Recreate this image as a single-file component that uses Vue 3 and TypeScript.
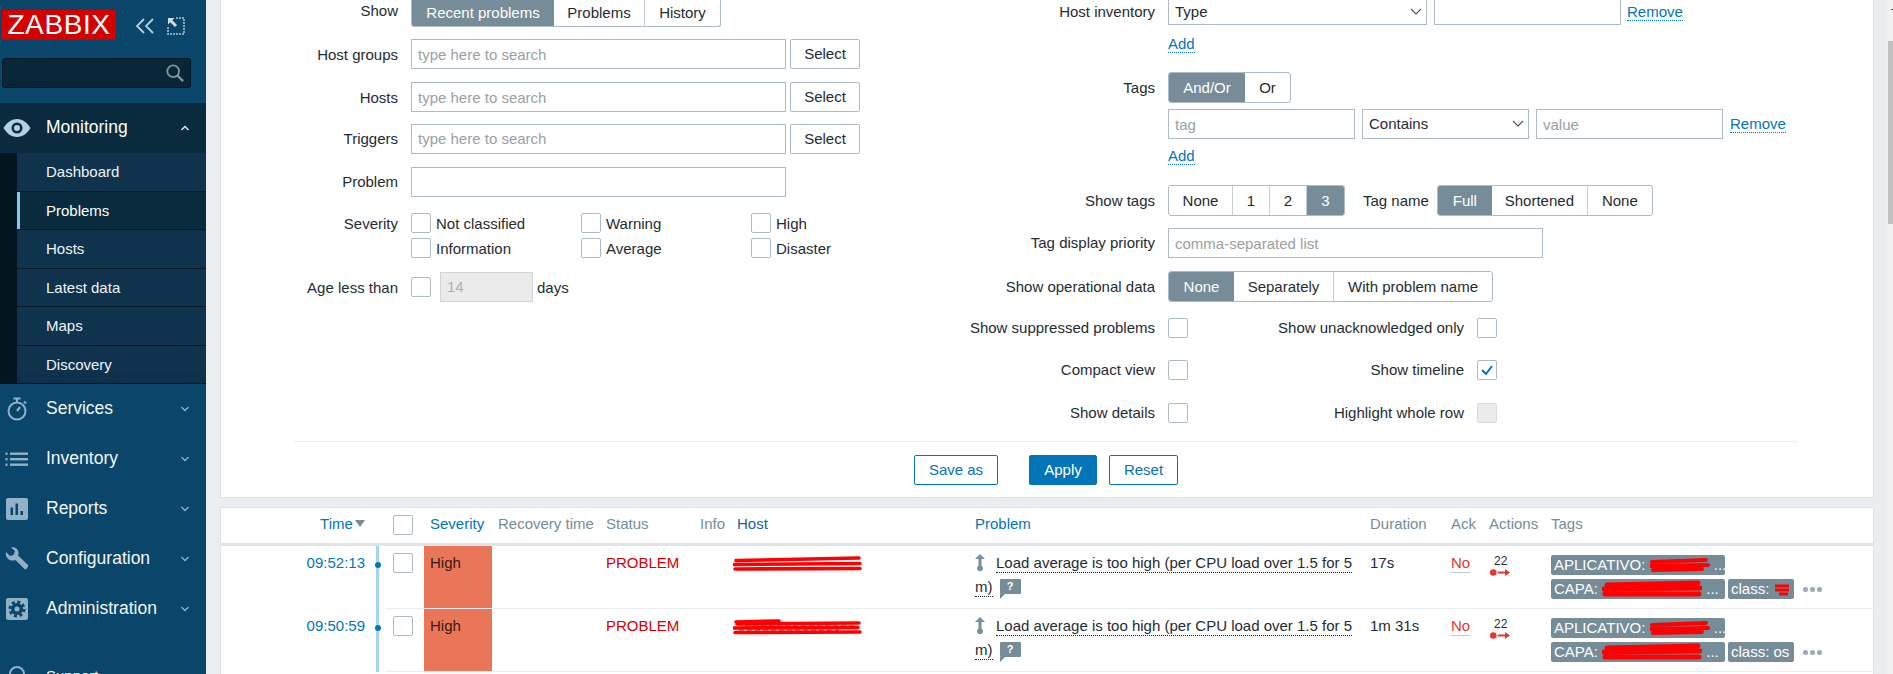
<script setup lang="ts">
type Seg = { t: string; on?: boolean; w: number }
const showSeg: Seg[] = [{ t: 'Recent problems', on: true, w: 142 }, { t: 'Problems', w: 91 }, { t: 'History', w: 75 }]
const andOr: Seg[] = [{ t: 'And/Or', on: true, w: 76 }, { t: 'Or', w: 45 }]
const showTags: Seg[] = [{ t: 'None', w: 64 }, { t: '1', w: 37 }, { t: '2', w: 37 }, { t: '3', on: true, w: 37 }]
const tagName: Seg[] = [{ t: 'Full', on: true, w: 54 }, { t: 'Shortened', w: 96 }, { t: 'None', w: 64 }]
const opData: Seg[] = [{ t: 'None', on: true, w: 65 }, { t: 'Separately', w: 100 }, { t: 'With problem name', w: 158 }]
const subMenu = ['Dashboard', 'Problems', 'Hosts', 'Latest data', 'Maps', 'Discovery']
const multi = ['Host groups', 'Hosts', 'Triggers']
const sev = ['Not classified', 'Warning', 'High', 'Information', 'Average', 'Disaster']
const rows = [
  { time: '09:52:13', dur: '17s' },
  { time: '09:50:59', dur: '1m 31s' }
]
</script>

<template>
  <div class="page">
    <aside class="side">
      <div class="brand">
        <span class="logo">ZABBIX</span>
        <svg class="ctl" width="22" height="18" viewBox="0 0 22 18"><path d="M10 2 3 9l7 7M19 2l-7 7 7 7" fill="none" stroke="#b9cfdc" stroke-width="1.8"/></svg>
        <svg class="ctl ctl2" width="18" height="18" viewBox="0 0 18 18"><path d="M9 1h8v16H1V9" fill="none" stroke="#a9c3d3" stroke-width="1.6" stroke-dasharray="2 1"/><path d="M1 1h6.500L5.300 3.200 10 8l-2 2-4.800-4.700L1 7.500z" fill="#cfdfe8"/></svg>
      </div>
      <div class="search">
        <svg width="18" height="18" viewBox="0 0 20 20"><circle cx="8" cy="8" r="6.500" fill="none" stroke="#7d97a6" stroke-width="2"/><path d="m12.500 12.500 6.500 6.500" stroke="#7d97a6" stroke-width="2.600"/></svg>
      </div>
      <div class="nav active">
        <svg class="nicon" width="28" height="20" viewBox="0 0 28 20"><path fill-rule="evenodd" d="M14 1C8 1 3.500 5 .5 10 3.500 15 8 19 14 19s10.500-4 13.500-9C24.500 5 20 1 14 1Zm0 3.500a5.500 5.500 0 1 1 0 11 5.500 5.500 0 0 1 0-11Zm0 2.500a3 3 0 1 0 0 6 3 3 0 0 0 0-6Z" fill="#b4d0e1"/></svg>
        <span class="ntext">Monitoring</span>
        <svg class="chev" width="8" height="6" viewBox="0 0 8 6"><path d="m.5 5 3.500-3.500L7.500 5" fill="none" stroke="#e3edf3" stroke-width="1.300"/></svg>
      </div>
      <div class="subwrap">
        <ul class="sub">
          <li v-for="s in subMenu" :key="s" :class="{ cur: s === 'Problems' }">{{ s }}</li>
        </ul>
      </div>
      <div class="nav">
        <svg class="nicon" width="28" height="24" viewBox="0 0 28 24"><g fill="none" stroke="#8fb2c8" stroke-width="2"><circle cx="14" cy="14" r="8.500"/><path d="M10.500 1.500h7M14 2v3M21 4.500l2 2"/><path d="m14 14 3-4" stroke-width="2.200"/></g></svg>
        <span class="ntext">Services</span>
        <svg class="chev" width="8" height="6" viewBox="0 0 8 6"><path d="m.5 1 3.500 3.500L7.500 1" fill="none" stroke="#8fb2c8" stroke-width="1.300"/></svg>
      </div>
      <div class="nav">
        <svg class="nicon" width="28" height="16" viewBox="0 0 28 16"><g fill="#8fb2c8"><rect x="2.500" y="1.500" width="2" height="2.400"/><rect x="7" y="1.500" width="18" height="2.400"/><rect x="2.500" y="7" width="2" height="2.400"/><rect x="7" y="7" width="18" height="2.400"/><rect x="2.500" y="12.500" width="2" height="2.400"/><rect x="7" y="12.500" width="18" height="2.400"/></g></svg>
        <span class="ntext">Inventory</span>
        <svg class="chev" width="8" height="6" viewBox="0 0 8 6"><path d="m.5 1 3.500 3.500L7.500 1" fill="none" stroke="#8fb2c8" stroke-width="1.300"/></svg>
      </div>
      <div class="nav">
        <svg class="nicon" width="28" height="22" viewBox="0 0 28 22"><path fill-rule="evenodd" d="M5 0h18a2 2 0 0 1 2 2v18a2 2 0 0 1-2 2H5a2 2 0 0 1-2-2V2a2 2 0 0 1 2-2Zm2.500 9.500V17h2.500V9.500Zm5-4V17H15V5.500Zm5 7.500v4H20v-4Z" fill="#8fb2c8"/></svg>
        <span class="ntext">Reports</span>
        <svg class="chev" width="8" height="6" viewBox="0 0 8 6"><path d="m.5 1 3.500 3.500L7.500 1" fill="none" stroke="#8fb2c8" stroke-width="1.300"/></svg>
      </div>
      <div class="nav">
        <svg class="nicon" width="28" height="24" viewBox="0 0 28 24"><path d="M3 5l4 4 3.500-1L12 4 8 .5C12-.5 15.500 2 15.500 6c0 .9-.2 1.700-.5 2.500L25 18c.5 2-1 4-3 4.500L12.500 13c-1 .4-2 .5-3 .5C5 13.500 2 9.500 3 5Z" fill="#8fb2c8"/></svg>
        <span class="ntext">Configuration</span>
        <svg class="chev" width="8" height="6" viewBox="0 0 8 6"><path d="m.5 1 3.500 3.500L7.500 1" fill="none" stroke="#8fb2c8" stroke-width="1.300"/></svg>
      </div>
      <div class="nav">
        <svg class="nicon" width="28" height="22" viewBox="0 0 28 22"><rect x="3" width="22" height="22" rx="2" fill="#8fb2c8"/><circle cx="14" cy="11" r="6" fill="#0a466a"/><circle cx="14" cy="11" r="7" fill="none" stroke="#0a466a" stroke-width="3" stroke-dasharray="3 2.500"/><circle cx="14" cy="11" r="2.500" fill="#8fb2c8"/></svg>
        <span class="ntext">Administration</span>
        <svg class="chev" width="8" height="6" viewBox="0 0 8 6"><path d="m.5 1 3.500 3.500L7.500 1" fill="none" stroke="#8fb2c8" stroke-width="1.300"/></svg>
      </div>
      <div class="support">
        <svg class="nicon" width="28" height="22" viewBox="0 0 28 22"><path d="M7 16v-6a7 7 0 0 1 14 0v6" fill="none" stroke="#8fb2c8" stroke-width="2"/></svg>
        <span>Support</span>
      </div>
    </aside>

    <main class="main">
      <section class="filter">
        <div class="cols">
          <div class="left">
            <div class="frow first">
              <label class="lab">Show</label>
              <div class="seg"><span v-for="s in showSeg" :key="s.t" :class="{ on: s.on }" :style="{ width: s.w + 'px' }">{{ s.t }}</span></div>
            </div>
            <div v-for="m in multi" :key="m" class="frow r30">
              <label class="lab">{{ m }}</label>
              <div class="inp wide ph">type here to search</div>
              <button class="sel">Select</button>
            </div>
            <div class="frow r30">
              <label class="lab">Problem</label>
              <div class="inp wide"></div>
            </div>
            <div class="frow sevrow">
              <label class="lab">Severity</label>
              <div class="sevgrid">
                <div v-for="s in sev" :key="s" class="chk"><i class="box"></i><span>{{ s }}</span></div>
              </div>
            </div>
            <div class="frow age">
              <label class="lab">Age less than</label>
              <i class="box"></i>
              <div class="inp dis">14</div>
              <span class="days">days</span>
            </div>
          </div>
          <div class="right">
            <div class="frow rfirst">
              <label class="lab rlab">Host inventory</label>
              <div class="inp dd w259">Type<svg width="12" height="8" viewBox="0 0 12 8"><path d="m1 1 5 5 5-5" fill="none" stroke="#4a5a63" stroke-width="1.200"/></svg></div>
              <div class="inp w187"></div>
              <a class="lnk">Remove</a>
            </div>
            <div class="frow addrow"><a class="lnk">Add</a></div>
            <div class="frow tags">
              <label class="lab rlab">Tags</label>
              <div class="seg seg2"><span v-for="s in andOr" :key="s.t" :class="{ on: s.on }" :style="{ width: s.w + 'px' }">{{ s.t }}</span></div>
            </div>
            <div class="frow tagrow">
              <div class="inp ph w187b">tag</div>
              <div class="inp dd w167">Contains<svg width="12" height="8" viewBox="0 0 12 8"><path d="m1 1 5 5 5-5" fill="none" stroke="#4a5a63" stroke-width="1.200"/></svg></div>
              <div class="inp ph w187b">value</div>
              <a class="lnk">Remove</a>
            </div>
            <div class="frow addrow2"><a class="lnk">Add</a></div>
            <div class="frow showtags">
              <label class="lab rlab">Show tags</label>
              <div class="seg seg2"><span v-for="s in showTags" :key="s.t" :class="{ on: s.on }" :style="{ width: s.w + 'px' }">{{ s.t }}</span></div>
              <label class="tname">Tag name</label>
              <div class="seg seg2"><span v-for="s in tagName" :key="s.t" :class="{ on: s.on }" :style="{ width: s.w + 'px' }">{{ s.t }}</span></div>
            </div>
            <div class="frow prio">
              <label class="lab rlab">Tag display priority</label>
              <div class="inp ph w375">comma-separated list</div>
            </div>
            <div class="frow opdata">
              <label class="lab rlab">Show operational data</label>
              <div class="seg seg2"><span v-for="s in opData" :key="s.t" :class="{ on: s.on }" :style="{ width: s.w + 'px' }">{{ s.t }}</span></div>
            </div>
            <div class="frow pair p1">
              <label class="lab rlab">Show suppressed problems</label><i class="box"></i>
              <label class="lab2">Show unacknowledged only</label><i class="box"></i>
            </div>
            <div class="frow pair p2">
              <label class="lab rlab">Compact view</label><i class="box"></i>
              <label class="lab2">Show timeline</label>
              <i class="box"><svg width="14" height="12" viewBox="0 0 14 12"><path d="m2 6 4 4 6-8" fill="none" stroke="#0275b8" stroke-width="2"/></svg></i>
            </div>
            <div class="frow pair p3">
              <label class="lab rlab">Show details</label><i class="box"></i>
              <label class="lab2">Highlight whole row</label><i class="box off"></i>
            </div>
          </div>
        </div>
        <div class="actions">
          <button class="btn save">Save as</button>
          <button class="btn apply">Apply</button>
          <button class="btn reset">Reset</button>
        </div>
      </section>

      <section class="table">
        <div class="thead">
          <span class="c time blue">Time <i class="sort"></i></span>
          <span class="c ck hck"><i class="box"></i></span>
          <span class="c sevc blue">Severity</span>
          <span class="c rec">Recovery time</span>
          <span class="c stat">Status</span>
          <span class="c info">Info</span>
          <span class="c host blue2">Host</span>
          <span class="c prob blue">Problem</span>
          <span class="c dur">Duration</span>
          <span class="c ack">Ack</span>
          <span class="c act">Actions</span>
          <span class="c tg">Tags</span>
        </div>
        <div v-for="(r, i) in rows" :key="r.time" class="trow">
          <span class="c time tval">{{ r.time }}</span>
          <span class="tl"><i class="dot"></i></span>
          <span class="c ck"><i class="box"></i></span>
          <span class="c sevc high">High</span>
          <span class="c rec"></span>
          <span class="c stat red">PROBLEM</span>
          <span class="c info"></span>
          <span class="c host">
            <svg width="130" height="18" viewBox="0 0 130 18"><path :d="i === 0 ? 'M8 9h110' : 'M12 8h112M6 12h100'" stroke="#222" stroke-width="1" fill="none" stroke-dasharray="5 3"/><path :d="i === 0 ? 'M3 5.500 126 3M1 9.500 127 8.500M2 14 127 13.500' : 'M3 4 46 3M4 6 126 5M1 10 125 9.500M2 14.500 127 14'" stroke="#ff0000" stroke-width="3.600" fill="none" stroke-linecap="round"/></svg>
          </span>
          <div class="c prob ptext">
            <div class="pline">
              <svg class="arrow" width="10" height="18" viewBox="0 0 10 18"><path d="M5 0 10 5H6.500v6.700a3 3 0 1 1-3 0V5H0z" fill="#76909f"/></svg>
              <span class="dotted">Load average is too high (per CPU load over 1.5 for 5</span>
            </div>
            <div class="pline">
              <span class="dotted">m)</span>
              <span class="hint"><b>?</b><i></i></span>
            </div>
          </div>
          <span class="c dur plain">{{ r.dur }}</span>
          <span class="c ack"><span class="no">No</span></span>
          <span class="c act acticon">
            <em>22</em>
            <svg width="22" height="9" viewBox="0 0 22 9"><circle cx="3.300" cy="4.500" r="3.300" fill="#e33734"/><path d="M8 3.500h7V1l5 3.500L15 8V5.500H8z" fill="#e33734"/></svg>
          </span>
          <div class="c tg chips">
            <div class="chiprow">
              <span class="chip w174">APLICATIVO: <svg class="scr" width="60" height="14" viewBox="0 0 60 14"><path d="M2 4 56 2M1 8 58 7M3 12 52 11" stroke="#f00" stroke-width="4" fill="none" stroke-linecap="round"/></svg> ...</span>
            </div>
            <div class="chiprow">
              <span class="chip w174">CAPA: <svg class="scr" width="100" height="18" viewBox="0 0 100 18"><path d="M5 5 96 3M2 9 98 8M3 14 97 14" stroke="#f00" stroke-width="5" fill="none" stroke-linecap="round"/></svg> ...</span>
              <span class="chip w66">class: <template v-if="i === 1">os</template><svg v-else width="16" height="14" viewBox="0 0 16 14"><path d="M1 4h14M1 8h14M5 12h9" stroke="#f00" stroke-width="3" fill="none"/></svg></span>
              <span class="more"><i></i><i></i><i></i></span>
            </div>
          </div>
        </div>
      </section>
    </main>
    <div class="scroll"><i></i></div>
  </div>
</template>

<style>
html, body { margin: 0; height: 674px; overflow: hidden; background: #ebeef0; }
</style>

<style scoped>
.page { display: flex; width: 1893px; height: 674px; overflow: hidden; font: 15px/1.2 "Liberation Sans", Arial, sans-serif; color: #1f2c33; background: #ebeef0; }

/* sidebar */
.side { width: 206px; flex: none; background: #0a466a; color: #f2f6f8; height: 674px; overflow: hidden; }
.brand { height: 58px; display: flex; align-items: flex-start; padding: 10px 0 0 2px; box-sizing: border-box; }
.logo { width: 114px; height: 30px; background: #d40000; color: #fff; font-size: 28px; line-height: 30px; text-align: center; letter-spacing: .6px; }
.ctl { margin: 7px 0 0 18px; }
.ctl2 { margin-left: 11px; }
.search { margin-left: 2px; width: 189px; height: 30px; box-sizing: border-box; background: #082637; border: 1px solid #041722; border-radius: 3px; display: flex; justify-content: flex-end; align-items: center; padding-right: 6px; }
.nav { height: 50px; display: flex; align-items: center; font-size: 17.500px; }
.nav.active { margin-top: 15px; background: #0a2b3e; color: #fff; }
.nicon { width: 28px; margin-left: 3px; flex: none; }
.ntext { margin-left: 15px; flex: 1; padding-bottom: 2px; }
.chev { margin-right: 17px; }
.subwrap { background: #04151f; padding-left: 17px; height: 231px; }
.sub { list-style: none; margin: 0; padding: 0; font-size: 15px; }
.sub li { height: 37.500px; line-height: 37px; padding-left: 29px; background: #0f324d; border-bottom: 1.200px solid #061b29; color: #eef4f7; }
.sub li.cur { background: #0a2b3e; color: #fff; box-shadow: inset 3px 0 0 #7ec8f2; }
.sub li:last-child { border-bottom: 0; background: linear-gradient(#0f324d 70%, #0c3048); }
.support { display: flex; align-items: flex-start; margin-top: 30px; }
.support span { margin: 3px 0 0 15px; }

/* layout */
.main { flex: 1; min-width: 0; padding-left: 14px; box-sizing: border-box; }
.filter { width: 1654px; height: 498px; background: #fff; border: 1px solid #dfe4e7; border-top: 0; box-sizing: border-box; }
.cols { display: flex; height: 441px; }
.left { width: 717px; flex: none; }
.right { flex: 1; margin-left: 2px; }

/* form */
.frow { display: flex; align-items: center; }
.lab { width: 177px; text-align: right; margin-right: 13px; flex: none; }
.rlab { width: 215px; }
.first { height: 27px; }
.first .lab { padding-bottom: 5px; }
.r30 { height: 30px; margin-top: 13px; }
.r30:nth-child(2) { margin-top: 12px; padding-top: 0; }
.r30:nth-child(4) { margin-top: 12px; }
.r30:nth-child(2) .lab, .r30:nth-child(3) .lab { padding-top: 1px; }
.inp { height: 30px; box-sizing: border-box; border: 1px solid #acbbc4; background: #fff; display: flex; align-items: center; padding: 0 6px; flex: none; }
.wide { width: 375px; }
.ph { color: #9aa0a4; padding-top: 1px; }
.r30:nth-child(4) .ph { padding-top: 0; }
.sel { margin-left: 4px; width: 70px; height: 30px; box-sizing: border-box; background: #fff; border: 1px solid #acbbc4; border-radius: 2px; font: inherit; color: #1f2c33; padding: 0; }
.sevrow { margin-top: 16px; align-items: flex-start; }
.sevrow .lab { padding-top: 2px; }
.sevgrid { display: grid; grid-template-columns: 170px 170px 170px; row-gap: 5px; }
.chk { display: flex; align-items: center; height: 20px; }
.chk .box { margin-right: 5px; }
.chk span { padding-top: 2px; }
.box { width: 20px; height: 20px; box-sizing: border-box; border: 1px solid #acbbc4; border-radius: 2px; background: #fff; flex: none; display: inline-flex; align-items: center; justify-content: center; }
.box.off { background: #ebebeb; border-color: #dcdcdc; }
.age { margin-top: 14px; }
.age .lab { padding-top: 1px; }
.dis { width: 93px; margin-left: 9px; background: #ebebeb; border-color: #cfd6da; color: #a8b0b5; }
.days { margin-left: 4px; padding-top: 2px; }
.seg { display: flex; height: 27px; box-sizing: border-box; border: 1px solid #acbbc4; border-top: 0; border-radius: 0 0 3px 3px; overflow: hidden; flex: none; }
.seg span { display: flex; align-items: center; justify-content: center; box-sizing: border-box; border-right: 1px solid #c4d0d6; color: #1f2c33; }
.seg span:last-child { border-right: 0; }
.seg span.on { background: #768d99; color: #fff; border-right: 0; }
.seg2 { height: 31px; border-top: 1px solid #acbbc4; border-radius: 3px; }
.rfirst { height: 25px; }
.rfirst .lab { padding-bottom: 2px; }
.rfirst .inp { height: 26px; border-top: 0; margin-top: -1px; }
.w259 { width: 259px; }
.w187 { width: 187px; margin-left: 7px; }
.dd { justify-content: space-between; padding-right: 4px; }
.dd svg { flex: none; }
.lnk { color: #0275b8; border-bottom: 1px dotted #0275b8; line-height: 16px; margin-left: 6px; }
.addrow { height: 47px; padding-left: 222px; padding-bottom: 8px; box-sizing: border-box; }
.tags { height: 31px; }
.tagrow { margin-top: 6px; padding-left: 228px; }
.tagrow .lnk { margin-left: 0; }
.w187b { width: 187px; margin-right: 7px; }
.w167 { width: 167px; margin-right: 7px; }
.addrow2 { height: 46px; padding-left: 228px; padding-bottom: 12px; box-sizing: border-box; }
.addrow2 .lnk { margin-left: 0; }
.showtags { height: 31px; }
.tname { margin: 0 8px 0 18px; }
.prio { margin-top: 12px; }
.w375 { width: 375px; }
.opdata { margin-top: 13px; }
.pair { height: 20px; }
.p1 { margin-top: 16px; }
.p2 { margin-top: 22px; }
.p3 { margin-top: 23px; }
.lab2 { width: 276px; margin-right: 13px; text-align: right; flex: none; }
.actions { border-top: 1px solid #ebeef0; margin: 0 75px 0 73px; padding-top: 13px; display: flex; }
.btn { height: 30px; box-sizing: border-box; border-radius: 2px; border: 1px solid #0275b8; background: #fff; color: #0275b8; font: inherit; padding: 0; }
.save { width: 84px; margin-left: 620px; }
.apply { width: 68px; margin-left: 31px; background: #0275b8; color: #fff; }
.reset { width: 69px; margin-left: 12px; }

/* table */
.table { width: 1654px; height: 167px; margin-top: 9px; background: #fff; border: 1px solid #dfe4e7; border-bottom: 0; box-sizing: border-box; }
.thead { display: flex; height: 35px; padding-bottom: 0; align-items: flex-start; border-bottom: 3px solid #dfe4e7; box-sizing: content-box; color: #768d99; }
.thead .c { padding-top: 7px; }
.thead .hck { padding-top: 7px; }
.thead .blue { color: #0275b8; }
.blue2 { color: #1c5f9c; }
.c { flex: none; box-sizing: border-box; }
.time { width: 144px; text-align: right; }
.ck { width: 31px; margin-left: 14px; padding-top: 7px; }
.hck { margin-left: 28px; display: flex; }
.sevc { width: 68px; padding-left: 6px; }
.rec { width: 114px; padding-left: 6px; }
.stat { width: 94px; }
.info { width: 37px; }
.host { width: 238px; }
.prob { width: 395px; }
.dur { width: 81px; }
.ack { width: 38px; }
.act { width: 62px; }
.tg { flex: 1; }
.sort { display: inline-block; width: 0; height: 0; border: 5px solid transparent; border-top: 7px solid #768d99; border-bottom: 0; margin-left: -2px; vertical-align: 2px; }
.trow { display: flex; height: 63px; box-sizing: border-box; align-items: flex-start; background: linear-gradient(#ebeef0, #ebeef0) no-repeat 165px 100% / 100% 1px; }
.tval { color: #0275b8; padding-top: 8px; }
.tl { width: 3px; height: 63px; background: #a5d5f0; margin-left: 11px; flex: none; display: flex; align-items: flex-start; justify-content: center; }
.dot { width: 6px; height: 6px; border-radius: 50%; background: #0275b8; flex: none; margin-top: 16px; }
.high { background: #e97659; height: 62px; padding-top: 8px; color: #3a1a10; }
.red { color: #d40000; padding-top: 8px; }
.trow .host { padding-top: 9px; }
.trow .host svg { display: block; margin-left: -4px; }
.ptext { padding-top: 5px; }
.pline { display: flex; align-items: center; height: 24px; }
.arrow { flex: none; margin-right: 11px; }
.dotted { border-bottom: 1px dotted #1f2c33; line-height: 18px; white-space: nowrap; }
.hint { position: relative; width: 21px; height: 15px; margin: -2px 0 0 7px; background: #768d99; border-radius: 1px; color: #fff; font-size: 11px; line-height: 15px; text-align: center; flex: none; }
.hint b { font-weight: 700; }
.hint i { position: absolute; left: 0; top: 15px; width: 0; height: 0; border-left: 5px solid #768d99; border-bottom: 5px solid transparent; }
.plain { padding-top: 8px; }
.trow .ack { padding-top: 8px; }
.no { color: #e33734; border-bottom: 1px solid #bccbd3; padding-bottom: 1px; }
.acticon { padding: 9px 0 0 1px; display: flex; flex-direction: column; align-items: flex-start; }
.acticon em { font-style: normal; font-size: 12px; line-height: 13px; margin-left: 4px; }
.chips { padding-top: 9px; }
.chiprow { display: flex; align-items: center; height: 20px; margin-bottom: 4px; }
.chip { height: 20px; box-sizing: border-box; background: #768d99; color: #fff; border-radius: 2px; display: flex; align-items: center; padding-left: 3px; white-space: pre; overflow: hidden; line-height: 20px; flex: none; }
.chip + .chip { margin-left: 3px; }
.w174 { width: 174px; }
.w66 { width: 66px; }
.scr { flex: none; }
.more { display: flex; gap: 2px; margin-left: 9px; }
.more i { width: 5px; height: 5px; border-radius: 50%; background: #9aa9b3; }

/* browser scrollbar */
.scroll { width: 7px; height: 674px; flex: none; background: #f1f1f1; }
.scroll::before { content: ""; display: block; width: 2px; height: 1px; margin: 9px 0 0 5px; background: #505050; }
.scroll i { display: block; width: 5px; height: 183px; margin: 31px 0 0 2px; background: #c1c1c1; }
</style>
